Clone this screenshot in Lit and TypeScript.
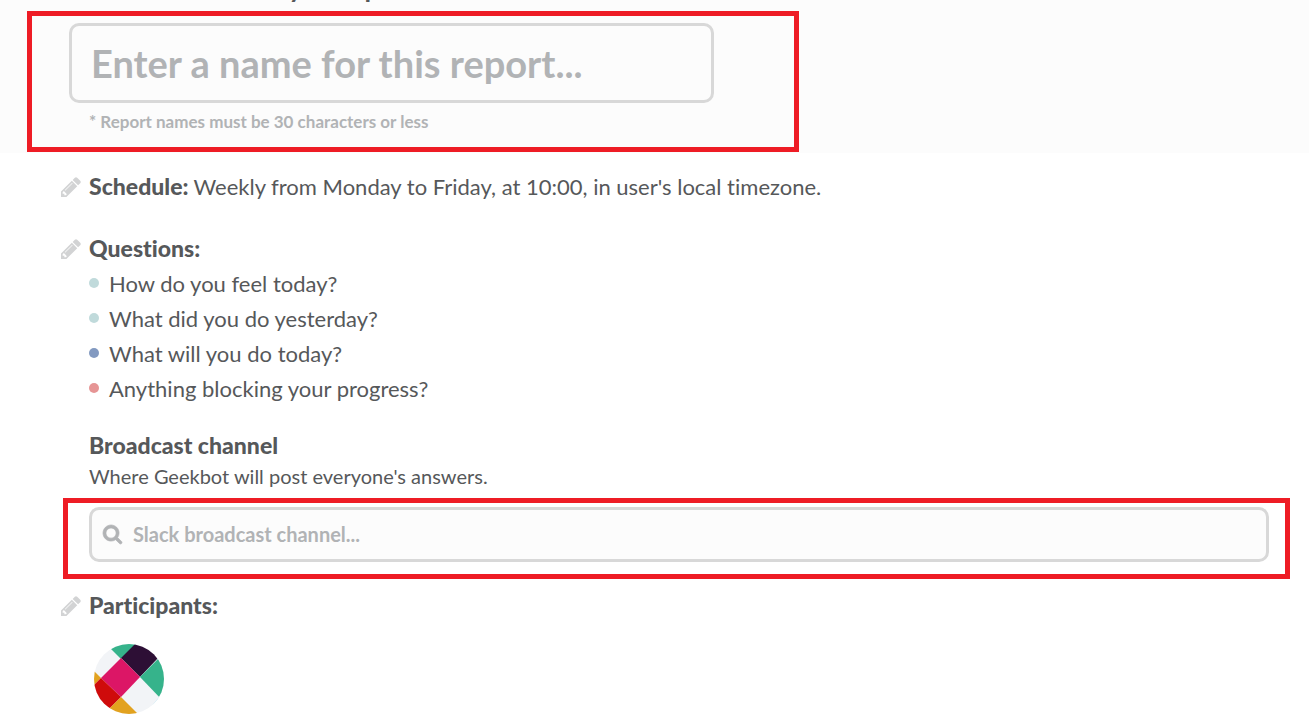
import { LitElement, html, css, svg } from "lit";
import { customElement, state } from "lit/decorators.js";

interface Question {
  text: string;
  tone: "teal" | "blue" | "red";
}

const pencil = html`<svg class="pencil" viewBox="0 0 1536 1536" aria-hidden="true">
  <path
    fill="currentColor"
    d="M363 1408l91-91-235-235-91 91v107h128v128h107zM886 480q0-22-22-22-10 0-17 7l-542 542q-7 7-7 17 0 22 22 22 10 0 17-7l542-542q7-7 7-17zM832 288l416 416-832 832H0v-416zM1515 384q0 53-37 90l-166 166-416-416 166-165q36-38 90-38 53 0 91 38l235 234q37 39 37 91z"
  />
</svg>`;

const magnifier = html`<svg class="magnifier" viewBox="0 0 1664 1664" aria-hidden="true">
  <path
    fill="currentColor"
    stroke="currentColor"
    stroke-width="60"
    d="M1152 704q0-185-131.500-316.500T704 256 387.500 387.500 256 704t131.500 316.500T704 1152t316.500-131.500T1152 704zm512 832q0 52-38 90t-90 38q-54 0-90-38l-343-342q-179 124-399 124-143 0-273.500-55.500t-225-150-150-225T0 704t55.500-273.500 150-225 225-150T704 0t273.500 55.500 225 150 150 225T1408 704q0 220-124 399l343 343q37 37 37 90z"
  />
</svg>`;

@customElement("app-root")
export class AppRoot extends LitElement {
  @state() private questions: Question[] = [
    { text: "How do you feel today?", tone: "teal" },
    { text: "What did you do yesterday?", tone: "teal" },
    { text: "What will you do today?", tone: "blue" },
    { text: "Anything blocking your progress?", tone: "red" },
  ];

  static styles = css`
    :host {
      display: block;
      height: 100vh;
      overflow: hidden;
      background: #fff;
      color: #56585a;
      font-family: Lato, "Open Sans", sans-serif;
      font-size: 22px;
      line-height: 35px;
      font-variant-ligatures: none;
    }
    * {
      box-sizing: border-box;
    }
    h2,
    p,
    ul {
      margin: 0;
      padding: 0;
    }
    h2 {
      font-size: 23px;
      font-weight: 900;
    }
    .intro {
      background: #fcfcfc;
      padding: 0 27px 1px;
    }
    .intro-title {
      display: block;
      margin: -29px 0 0 57px;
      padding-bottom: 5px;
      font-size: 24px;
      font-weight: 900;
    }
    .frame {
      border: 5px solid #ee1c25;
    }
    .name-frame {
      max-width: 772px;
      padding: 7px 80px 10px 37px;
    }
    .field {
      display: flex;
      align-items: center;
      border: 3px solid #d8d8d8;
      border-radius: 10px;
      background: #fcfcfc;
      color: #b1b3b5;
    }
    .field input {
      flex: 1;
      min-width: 0;
      border: 0;
      outline: 0;
      padding: 0;
      background: none;
      color: #56585a;
      font: inherit;
      font-weight: 700;
      font-variant-ligatures: none;
    }
    .field input::placeholder {
      color: #b1b3b5;
      opacity: 1;
    }
    .name-field {
      height: 80px;
      padding: 0 19px;
      font-size: 38px;
    }
    .hint {
      padding: 4px 0 0 20px;
      color: #b1b3b5;
      font-size: 17px;
      line-height: 30px;
      font-weight: 700;
    }
    .details {
      padding: 16px 19px 0 61px;
    }
    .row {
      display: flex;
      align-items: center;
    }
    .edit {
      display: flex;
      width: 28px;
      border: 0;
      padding: 0;
      background: none;
      color: #d2d3d4;
      cursor: pointer;
    }
    .pencil {
      width: 20px;
      height: 20px;
    }
    .schedule {
      margin-bottom: 27px;
    }
    .schedule p {
      margin-left: 5px;
    }
    .questions {
      margin: 0 0 22px 28px;
      list-style: none;
    }
    .questions li {
      display: flex;
      align-items: center;
      gap: 10px;
    }
    .dot {
      width: 10px;
      height: 10px;
      margin-bottom: 2px;
      border-radius: 50%;
    }
    .teal {
      background: #c0dadb;
    }
    .blue {
      background: #8299c0;
    }
    .red {
      background: #e69595;
    }
    .broadcast {
      margin-left: 28px;
    }
    .broadcast p {
      font-size: 20px;
      line-height: 26px;
    }
    .channel-frame {
      margin: 9px 0 9px 2px;
      padding: 4px 16px 12px 21px;
    }
    .channel-field {
      height: 55px;
      padding: 0 11px;
      gap: 11px;
      font-size: 20px;
    }
    .magnifier {
      width: 19px;
      height: 19px;
      overflow: visible;
    }
    .avatar {
      display: block;
      width: 70px;
      height: 70px;
      margin: 21px 0 0 33px;
      border-radius: 50%;
    }
  `;

  render() {
    return html`
      <header class="intro">
        <label class="intro-title" for="name">Choose a name for your report</label>
        <div class="frame name-frame">
          <div class="field name-field">
            <input id="name" type="text" maxlength="30" aria-describedby="hint" placeholder="Enter a name for this report..." />
          </div>
          <p class="hint" id="hint">* Report names must be 30 characters or less</p>
        </div>
      </header>
      <main class="details">
        <section class="row schedule">
          <button class="edit" aria-label="Edit schedule">${pencil}</button>
          <h2>Schedule:</h2>
          <p>Weekly from Monday to Friday, at 10:00, in user's local timezone.</p>
        </section>
        <section>
          <div class="row">
            <button class="edit" aria-label="Edit questions">${pencil}</button>
            <h2>Questions:</h2>
          </div>
          <ul class="questions">
            ${this.questions.map((q) => html`<li><span class="dot ${q.tone}"></span>${q.text}</li>`)}
          </ul>
        </section>
        <section>
          <div class="broadcast">
            <h2><label for="channel">Broadcast channel</label></h2>
            <p>Where Geekbot will post everyone's answers.</p>
          </div>
          <div class="frame channel-frame">
            <div class="field channel-field">
              ${magnifier}
              <input id="channel" type="text" placeholder="Slack broadcast channel..." />
            </div>
          </div>
        </section>
        <section>
          <div class="row">
            <button class="edit" aria-label="Edit participants">${pencil}</button>
            <h2>Participants:</h2>
          </div>
          <svg class="avatar" viewBox="0 0 70 70" role="img" aria-label="Participant">
            ${svg`
              <rect width="70" height="70" fill="#f2f4f7" />
              <path d="M17 5L27 15L45-3H17z" fill="#36b38b" />
              <path d="M27 14L45-4L70 8L64 14L46 33z" fill="#2d0f35" />
              <path d="M46 33L66 13H70V58z" fill="#36b38b" />
              <path d="M27 14L46 33L27 53L7 34z" fill="#dc1666" />
              <path d="M0 27L7 34L0 41z" fill="#e2a21f" />
              <path d="M7 34L27 53L16 64L0 60V41z" fill="#cf0b0b" />
              <path d="M27 53L44 70H10z" fill="#e2a21f" />
              <path d="M52 69L65 53L70 60V70z" fill="#c4e6f2" />
            `}
          </svg>
        </section>
      </main>
    `;
  }
}
